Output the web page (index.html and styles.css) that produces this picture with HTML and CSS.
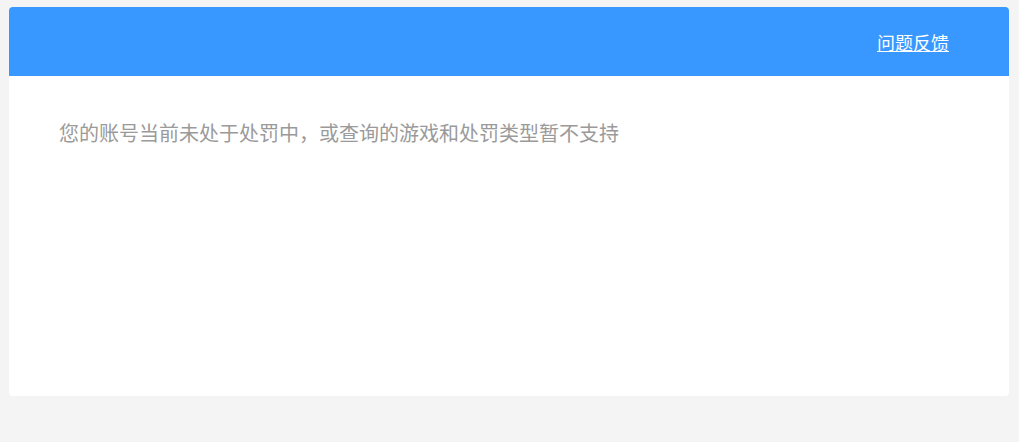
FILE: index.html
```html
<!DOCTYPE html>
<html lang="zh-CN">
<head>
<meta charset="utf-8">
<title>处罚查询</title>
<link rel="stylesheet" href="styles.css">
</head>
<body>
<div class="card">
  <div class="card-header">
    <a class="feedback" href="#">问题反馈</a>
  </div>
  <div class="card-body">
    <p class="message">您的账号当前未处于处罚中，或查询的游戏和处罚类型暂不支持</p>
  </div>
</div>
</body>
</html>
```
FILE: styles.css
```css
html, body {
  margin: 0;
  padding: 0;
  background: #f4f4f4;
}
body {
  padding: 7px 10px 0 9px;
  font-family: "Microsoft YaHei", "Noto Sans CJK SC", "Liberation Sans", sans-serif;
}
.card {
  width: 1000px;
  height: 389px;
  background: #ffffff;
  border-radius: 4px;
  overflow: hidden;
}
.card-header {
  height: 69px;
  background: #3998ff;
  display: flex;
  align-items: center;
  justify-content: flex-end;
  padding-right: 60px;
}
.feedback {
  color: #ffffff;
  font-size: 18px;
  line-height: 24px;
  text-decoration: underline;
}
.card-body {
  padding: 40px 50px;
}
.message {
  margin: 0;
  font-size: 20px;
  line-height: 34px;
  color: #9a9a9a;
}
```
